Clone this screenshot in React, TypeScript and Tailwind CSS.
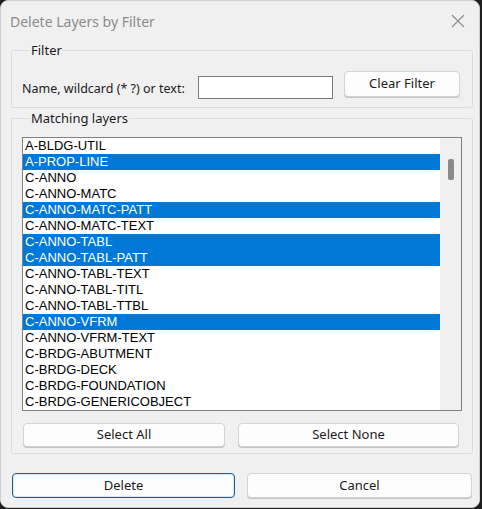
import React from "react";

const layers: { name: string; sel?: boolean }[] = [
  { name: "A-BLDG-UTIL" },
  { name: "A-PROP-LINE", sel: true },
  { name: "C-ANNO" },
  { name: "C-ANNO-MATC" },
  { name: "C-ANNO-MATC-PATT", sel: true },
  { name: "C-ANNO-MATC-TEXT" },
  { name: "C-ANNO-TABL", sel: true },
  { name: "C-ANNO-TABL-PATT", sel: true },
  { name: "C-ANNO-TABL-TEXT" },
  { name: "C-ANNO-TABL-TITL" },
  { name: "C-ANNO-TABL-TTBL" },
  { name: "C-ANNO-VFRM", sel: true },
  { name: "C-ANNO-VFRM-TEXT" },
  { name: "C-BRDG-ABUTMENT" },
  { name: "C-BRDG-DECK" },
  { name: "C-BRDG-FOUNDATION" },
  { name: "C-BRDG-GENERICOBJECT" },
];

const ui = { fontFamily: '"Noto Sans", "Liberation Sans", sans-serif' };
const list = { fontFamily: '"Liberation Sans", Arial, sans-serif' };

function Btn({
  children,
  className = "",
  primary = false,
}: {
  children: React.ReactNode;
  className?: string;
  primary?: boolean;
}) {
  return (
    <button
      className={`flex items-center justify-center rounded-[4px] bg-[#fdfdfd] text-[13px] text-[#1b1b1b] ${
        primary
          ? "border border-[#1d5f94] shadow-[inset_0_0_0_1px_#d9e7f3]"
          : "border border-[#d3d3d3] shadow-[0_1px_0_#c4c4c4]"
      } ${className}`}
      style={ui}
    >
      {children}
    </button>
  );
}

export default function App() {
  return (
    <div className="h-[509px] w-[482px] bg-[#1e1e1e]">
      <div className="flex h-[508px] w-[480px] flex-col rounded-[8px] border border-[#cfcfcf] bg-[#f0f0f0]">
        {/* title bar */}
        <div className="flex h-[40px] shrink-0 items-center justify-between pl-[9px] pr-[14px]">
          <span className="text-[14px] text-[#8c8c8c]" style={ui}>
            Delete Layers by Filter
          </span>
          <svg width="14" height="14" viewBox="0 0 14 14" fill="none">
            <path d="M1 1L13 13M13 1L1 13" stroke="#8a8a8a" strokeWidth="1.1" />
          </svg>
        </div>

        <div className="flex flex-col pl-[10px] pr-[6px]">
          {/* Filter group */}
          <fieldset className="rounded-[2px] border border-[#dcdcdc] pb-[8px] pl-[10px] pr-[12px]">
            <legend className="ml-[8px] px-[1px] text-[13px] leading-[18px] text-[#1b1b1b]" style={ui}>
              Filter
            </legend>
            <div className="mt-[12px] flex items-start">
              <span className="mt-[10px] text-[12.5px] leading-[16px] text-[#1b1b1b]" style={ui}>
                Name, wildcard (* ?) or text:
              </span>
              <input
                className="ml-auto mt-[5px] h-[23px] w-[135px] border border-[#7a7a7a] bg-white outline-none"
                readOnly
              />
              <Btn className="ml-[11px] h-[26px] w-[116px]">Clear Filter</Btn>
            </div>
          </fieldset>

          {/* Matching layers group */}
          <fieldset className="mt-[1px] rounded-[2px] border border-[#dcdcdc] pb-[6px] pl-[10px] pr-[10px]">
            <legend className="ml-[8px] px-[1px] text-[13px] leading-[18px] text-[#1b1b1b]" style={ui}>
              Matching layers
            </legend>
            <div className="mt-[10px] flex h-[274px] border border-[#828282] bg-white">
              <div className="flex flex-1 flex-col overflow-hidden">
                {layers.map((l) => (
                  <div
                    key={l.name}
                    className={`h-[16px] shrink-0 pl-[2px] text-[13px] leading-[16px] ${
                      l.sel ? "bg-[#0078d7] text-white" : "text-black"
                    }`}
                    style={list}
                  >
                    {l.name}
                  </div>
                ))}
              </div>
              <div className="flex w-[21px] shrink-0 justify-center bg-[#f0f0f0] pt-[21px]">
                <div className="h-[21px] w-[6px] rounded-[2px] bg-[#8a8a8a]" />
              </div>
            </div>
            <div className="mt-[12px] flex gap-[13px] pl-[1px] pr-[3px]">
              <Btn className="h-[24px] w-[202px]">Select All</Btn>
              <Btn className="h-[24px] flex-1">Select None</Btn>
            </div>
          </fieldset>

          {/* bottom buttons */}
          <div className="mt-[19px] flex gap-[12px] pl-[1px] pr-[1px]">
            <Btn primary className="h-[25px] w-[223px]">
              Delete
            </Btn>
            <Btn className="h-[25px] flex-1">Cancel</Btn>
          </div>
        </div>
      </div>
    </div>
  );
}
